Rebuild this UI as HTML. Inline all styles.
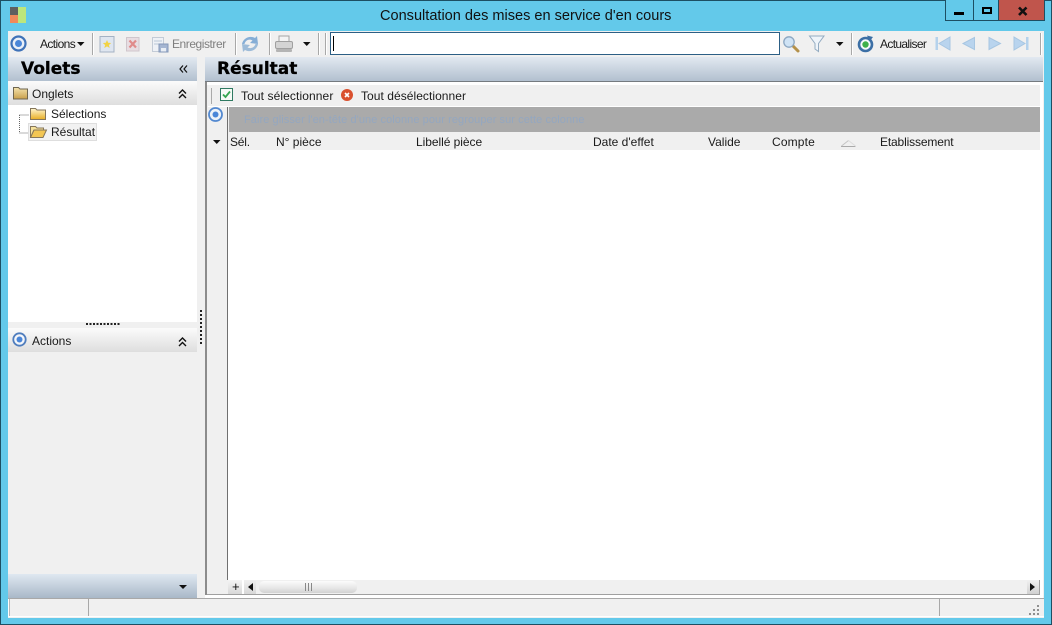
<!DOCTYPE html>
<html lang="fr"><head><meta charset="utf-8"><title>Consultation des mises en service d'en cours</title>
<style>
html,body{margin:0;padding:0;}
body{width:1052px;height:625px;overflow:hidden;position:relative;background:#63c9ea;font-family:"Liberation Sans",sans-serif;font-size:12px;color:#1a1a1a;}
.a{position:absolute;}
.t{position:absolute;white-space:nowrap;line-height:14px;}
.h{position:absolute;white-space:nowrap;font-family:"DejaVu Sans",sans-serif;font-size:17px;line-height:21px;font-weight:bold;color:#000;-webkit-text-stroke:.3px #000;}
svg{position:absolute;overflow:visible;}
.sep{position:absolute;width:1px;height:22px;top:33px;background:#a8a8a8;box-shadow:1px 0 0 #fff;}
</style></head><body>
<svg width="0" height="0" style="left:0;top:0"><defs>
<linearGradient id="g1" x1="0" y1="0" x2="0" y2="1"><stop offset="0" stop-color="#fff6cf"/><stop offset="1" stop-color="#e8ae24"/></linearGradient>
<linearGradient id="g2" x1="0" y1="0" x2="0" y2="1"><stop offset="0" stop-color="#f4e3ad"/><stop offset="1" stop-color="#c99f4c"/></linearGradient>
</defs></svg>
<div class="a" style="left:0;top:0;width:1050px;height:623px;border:1px solid #1d4f63;"></div>
<!-- app icon -->
<div class="a" style="left:10px;top:7px;width:8px;height:8px;background:#5f5f5f"></div>
<div class="a" style="left:10px;top:15px;width:8px;height:8px;background:#f0895a"></div>
<div class="a" style="left:18px;top:7px;width:8px;height:16px;background:#bde67c"></div>
<div class="t" style="left:380px;top:7px;font-size:14.55px;line-height:18px;color:#111">Consultation des mises en service d'en cours</div>
<!-- window buttons -->
<div class="a" style="left:945px;top:0;width:100px;height:21px;background:#c0554c;border:1px solid #1d4f63;border-top:0;box-sizing:border-box;"></div>
<div class="a" style="left:946px;top:0;width:53px;height:20px;background:#63c9ea"></div>
<div class="a" style="left:973px;top:0;width:1px;height:21px;background:#1d4f63"></div>
<div class="a" style="left:998px;top:0;width:1px;height:21px;background:#1d4f63"></div>
<div class="a" style="left:954px;top:12px;width:10px;height:3px;background:#000"></div>
<div class="a" style="left:982px;top:7px;width:6px;height:3px;border:2px solid #000;"></div>
<svg style="left:1018px;top:7px" width="10" height="9"><path d="M1 .5L8.500 8M8.500 .5L1 8" stroke="#111" stroke-width="2.600" fill="none"/></svg>
<!-- main client -->
<div class="a" style="left:8px;top:31px;width:1036px;height:587px;background:#f0f0f0"></div>
<!-- toolbar -->
<svg style="left:10px;top:35px" width="18" height="18"><circle cx="8.500" cy="8.500" r="7" fill="#e9eff8" stroke="#3f72b8" stroke-width="2.200"/><circle cx="8.500" cy="8.500" r="3.500" fill="#4a86d8"/></svg>
<div class="t" style="left:40px;top:37px;letter-spacing:-.6px">Actions</div>
<svg style="left:77px;top:42px" width="8" height="5"><path d="M0 0H7.500L3.750 4Z" fill="#111"/></svg>
<div class="sep" style="left:92px"></div>
<svg style="left:99px;top:36px" width="16" height="17"><rect x="1" y=".5" width="14" height="15.500" fill="#dfe6f0" stroke="#a4b2c4"/><path d="M8 4l1.200 2.800 3 .2-2.300 2 .8 3-2.700-1.600L5.300 12l.8-3-2.300-2 3-.2z" fill="#f2d345"/></svg>
<svg style="left:126px;top:37px" width="14" height="15"><rect x=".5" y=".5" width="12.500" height="13.500" fill="#e8dde2" stroke="#cfc6cc"/><path d="M3.500 3.500l6.500 7m0-7l-6.500 7" stroke="#e08b8b" stroke-width="2.200"/></svg>
<svg style="left:152px;top:37px" width="17" height="16"><rect x=".5" y=".5" width="11" height="14" fill="#eef1f6" stroke="#c3cbd6"/><path d="M2 4h8M2 7h8" stroke="#b9c6d6"/><rect x="7" y="7" width="9" height="8" fill="#a5b6d2" stroke="#8497b8"/><rect x="9" y="11" width="5" height="3.500" fill="#e9eef5"/></svg>
<div class="t" style="left:172px;top:37px;color:#7f7f7f;letter-spacing:-.45px">Enregistrer</div>
<div class="sep" style="left:235px"></div>
<svg style="left:241px;top:35px" width="18" height="18"><path d="M1 9C2 3 9 0 14 3l2-2 1 8-8-1 2.500-2.500C8.500 3.500 4.500 5 3.500 9z" fill="#86aed6"/><path d="M17 9c-1 6-8 9-13 6l-2 2-1-8 8 1-2.500 2.500c3 1.500 7 0 8-3.500z" fill="#9dbbd8"/></svg>
<div class="sep" style="left:269px"></div>
<svg style="left:275px;top:35px" width="18" height="18"><rect x="4" y="1" width="10" height="6" fill="#f4f4f4" stroke="#a4a4a4"/><rect x=".5" y="6.500" width="17" height="7" rx="1.500" fill="#d4d4d4" stroke="#a0a0a0"/><rect x="1" y="14" width="16" height="3" rx="1" fill="#b4b4b4"/></svg>
<svg style="left:303px;top:42px" width="8" height="5"><path d="M0 0H7.500L3.750 4Z" fill="#111"/></svg>
<div class="sep" style="left:318px"></div>
<div class="sep" style="left:325px"></div>
<div class="a" style="left:330px;top:32px;width:450px;height:23px;box-sizing:border-box;background:#fff;border:1px solid #2c5f85;"></div>
<div class="a" style="left:333px;top:36px;width:1px;height:15px;background:#000"></div>
<svg style="left:782px;top:35px" width="18" height="18"><path d="M10.500 10.500L16 16" stroke="#b4914a" stroke-width="3" stroke-linecap="round"/><circle cx="7" cy="7" r="5.200" fill="#cfe3f5" stroke="#8ca7c2" stroke-width="1.300"/></svg>
<svg style="left:809px;top:35px" width="16" height="18"><path d="M.5 1H15L9.500 8.500V16.500L6 14V8.500Z" fill="#eef4fa" stroke="#93abc1"/></svg>
<svg style="left:836px;top:42px" width="8" height="5"><path d="M0 0H7.500L3.750 4Z" fill="#111"/></svg>
<div class="sep" style="left:851px"></div>
<svg style="left:857px;top:35px" width="18" height="18"><circle cx="8.500" cy="9.500" r="6.500" fill="#f4f8fb" stroke="#3c6fa5" stroke-width="2.600"/><circle cx="8.500" cy="9.500" r="3.200" fill="#3db04a"/><path d="M10 0.500l6 1.500-3.500 4.500z" fill="#3c6fa5"/></svg>
<div class="t" style="left:880px;top:37px;letter-spacing:-.65px">Actualiser</div>
<svg style="left:935px;top:36px" width="16" height="16"><path d="M.5 1h2.500v13H.5z" fill="#b5d2ec"/><path d="M15 1v13L4 7.500z" fill="#b9d4ee" stroke="#a7c6e2"/></svg>
<svg style="left:962px;top:37px" width="14" height="14"><path d="M12.500 .5v12L1 6.500z" fill="#b9d4ee" stroke="#a7c6e2"/></svg>
<svg style="left:988px;top:37px" width="14" height="14"><path d="M1 .5v12L12.500 6.500z" fill="#b9d4ee" stroke="#a7c6e2"/></svg>
<svg style="left:1013px;top:36px" width="16" height="16"><path d="M1 1v13L12 7.500z" fill="#b9d4ee" stroke="#a7c6e2"/><path d="M13 1h2.500v13H13z" fill="#b5d2ec"/></svg>
<div class="sep" style="left:1040px"></div>
<!-- left panel -->
<div class="a" style="left:8px;top:57px;width:189px;height:24px;background:linear-gradient(#e2e9f1,#b2c0cf)"></div>
<div class="h" style="left:21px;top:59px">Volets</div>
<svg style="left:179px;top:65px" width="10" height="9"><path d="M4 .5L1 4l3 3.500M8 .5L5 4l3 3.500" fill="none" stroke="#111" stroke-width="1.200"/></svg>
<div class="a" style="left:8px;top:81px;width:189px;height:24px;background:linear-gradient(#fbfbfb,#dedede)"></div>
<svg style="left:13px;top:86px" width="15" height="14"><path d="M.5 13V1.500h5l1.500 1.500h7.500v10z" fill="url(#g2)" stroke="#6e654f"/></svg>
<div class="t" style="left:32px;top:87px">Onglets</div>
<svg style="left:178px;top:89px" width="10" height="10"><path d="M1 4.500L4.500 1 8 4.500M1 9L4.500 5.500 8 9" fill="none" stroke="#111" stroke-width="1.400"/></svg>
<div class="a" style="left:8px;top:105px;width:189px;height:217px;background:#fff"></div>
<svg style="left:19px;top:114px" width="11" height="20"><path d="M.5 1H10M.5 1V19H10" fill="none" stroke="#666" stroke-dasharray="1 1"/></svg>
<svg style="left:30px;top:107px" width="16" height="14"><path d="M.5 12.500V1.500h5l1.500 1.500h8.500v9.500z" fill="url(#g1)" stroke="#85765a"/></svg>
<div class="t" style="left:51px;top:107px">Sélections</div>
<div class="a" style="left:28px;top:123px;width:69px;height:18px;box-sizing:border-box;background:#f2f2f2;border:1px solid #dedede"></div>
<svg style="left:30px;top:125px" width="17" height="14"><path d="M.5 12.500V1.500h5l1.500 1.500h6.500v2H4z" fill="#f6e29b" stroke="#85765a"/><path d="M.5 12.500L4 5H16.500l-3.500 7.500z" fill="#f3c653" stroke="#85765a"/></svg>
<div class="t" style="left:51px;top:125px">Résultat</div>
<div class="a" style="left:8px;top:322px;width:189px;height:6px;background:#f0f0f0"></div>
<div class="a" style="left:86px;top:323px;width:34px;height:2px;background:repeating-linear-gradient(90deg,#222 0 2px,transparent 2px 3.500px)"></div>
<div class="a" style="left:8px;top:328px;width:189px;height:24px;background:linear-gradient(#fbfbfb,#dedede)"></div>
<svg style="left:12px;top:332px" width="16" height="16"><circle cx="7.500" cy="7.500" r="6.200" fill="#f4f6fa" stroke="#4f7dbd" stroke-width="1.800"/><circle cx="7.500" cy="7.500" r="3" fill="#4a86d8"/></svg>
<div class="t" style="left:32px;top:334px">Actions</div>
<svg style="left:178px;top:337px" width="10" height="10"><path d="M1 4.500L4.500 1 8 4.500M1 9L4.500 5.500 8 9" fill="none" stroke="#111" stroke-width="1.400"/></svg>
<div class="a" style="left:8px;top:574px;width:189px;height:24px;background:linear-gradient(#dfe8f1,#a9b8c8)"></div>
<svg style="left:179px;top:585px" width="9" height="5"><path d="M0 0H8L4 4Z" fill="#111"/></svg>
<!-- splitter -->
<div class="a" style="left:200px;top:310px;width:2px;height:35px;background:repeating-linear-gradient(#222 0 2px,transparent 2px 4px)"></div>
<!-- right panel -->
<div class="a" style="left:205px;top:57px;width:838px;height:25px;background:linear-gradient(#e2e9f1,#b2c0cf);border-bottom:1px solid #757b80;box-sizing:border-box"></div>
<div class="h" style="left:217px;top:59px">Résultat</div>
<div class="a" style="left:205px;top:82px;width:2px;height:515px;background:#8c8c8c"></div>
<div class="a" style="left:207px;top:82px;width:836px;height:3px;background:#fff"></div>
<div class="a" style="left:1040px;top:85px;width:3px;height:513px;background:#fff"></div>
<div class="a" style="left:205px;top:595px;width:838px;height:3px;background:#fff"></div>
<div class="a" style="left:211px;top:88px;width:1px;height:16px;background:#aaa"></div>
<div class="a" style="left:220px;top:88px;width:13px;height:13px;box-sizing:border-box;background:#f6faf6;border:1px solid #2f7a62"></div>
<svg style="left:222px;top:90px" width="10" height="9"><path d="M1 4.500l2.500 2.500L8 1.500" fill="none" stroke="#34a650" stroke-width="1.800"/></svg>
<div class="t" style="left:241px;top:89px;letter-spacing:.1px">Tout sélectionner</div>
<svg style="left:341px;top:89px" width="13" height="13"><circle cx="6" cy="6" r="6" fill="#d9502e"/><path d="M4 4l4 4m0-4l-4 4" stroke="#fff" stroke-width="1.600"/></svg>
<div class="t" style="left:361px;top:89px;letter-spacing:.05px">Tout désélectionner</div>
<div class="a" style="left:208px;top:106px;width:832px;height:1px;background:#fff"></div>
<svg style="left:208px;top:107px" width="16" height="16"><circle cx="7.500" cy="7.500" r="6.500" fill="#eef2f8" stroke="#5288d0" stroke-width="1.800"/><circle cx="7.500" cy="7.500" r="3" fill="#4a86d8"/></svg>
<div class="a" style="left:227px;top:107px;width:1px;height:473px;background:#707070"></div>
<div class="a" style="left:229px;top:107px;width:811px;height:25px;background:#aaaaaa"></div>
<div class="t" style="left:244px;top:113px;font-size:11px;letter-spacing:.07px;color:#94a7c0">Faire glisser l'en-tête d'une colonne pour regrouper sur cette colonne</div>
<svg style="left:213px;top:140px" width="8" height="4"><path d="M0 0H7.500L3.750 4Z" fill="#111"/></svg>
<div class="t" style="left:230px;top:135px;letter-spacing:-.2px">Sél.</div>
<div class="t" style="left:276px;top:135px">N° pièce</div>
<div class="t" style="left:416px;top:135px;letter-spacing:-.05px">Libellé pièce</div>
<div class="t" style="left:593px;top:135px">Date d'effet</div>
<div class="t" style="left:708px;top:135px">Valide</div>
<div class="t" style="left:772px;top:135px;letter-spacing:.15px">Compte</div>
<svg style="left:841px;top:140px" width="15" height="7"><path d="M0 6.500H14.500" stroke="#aaa"/><path d="M.5 6L7.500 .5" stroke="#c4c4c4"/><path d="M7.500 .5L14.500 6" stroke="#ddd"/></svg>
<div class="t" style="left:880px;top:135px;letter-spacing:-.15px">Etablissement</div>
<div class="a" style="left:228px;top:150px;width:812px;height:430px;background:#fff"></div>
<!-- h scrollbar -->
<div class="a" style="left:228px;top:580px;width:14px;height:14px;background:linear-gradient(#f4f4f4,#d8d8d8)"></div>
<div class="a" style="left:242px;top:580px;width:2px;height:14px;background:#fff"></div>
<div class="t" style="left:232px;top:580px;font-size:13px;color:#111">+</div>
<div class="a" style="left:244px;top:580px;width:12px;height:14px;background:linear-gradient(#f0f0f0,#d8d8d8)"></div>
<svg style="left:248px;top:583px" width="6" height="9"><path d="M5 0V8L0 4Z" fill="#111"/></svg>
<div class="a" style="left:259px;top:581px;width:98px;height:12px;border-radius:5px;background:linear-gradient(#fbfbfb,#e6e6e6 60%,#d2d2d2)"></div>
<div class="a" style="left:305px;top:583px;width:7px;height:8px;background:repeating-linear-gradient(90deg,#888 0 1px,transparent 1px 3px)"></div>
<div class="a" style="left:1027px;top:580px;width:12px;height:14px;background:linear-gradient(#f0f0f0,#d0d0d0)"></div>
<svg style="left:1030px;top:583px" width="6" height="9"><path d="M0 0V8L5 4Z" fill="#111"/></svg>
<div class="a" style="left:207px;top:594px;width:833px;height:1px;background:#a0a0a0"></div>
<div class="a" style="left:1039px;top:580px;width:1px;height:14px;background:#a0a0a0"></div>
<!-- status bar -->
<div class="a" style="left:8px;top:598px;width:1036px;height:1px;background:#a8a8a8"></div>
<div class="a" style="left:8px;top:599px;width:1px;height:17px;background:#fff"></div>
<div class="a" style="left:9px;top:599px;width:1px;height:17px;background:#b8b8b8"></div>
<div class="a" style="left:8px;top:616px;width:1036px;height:1px;background:#fff"></div>
<div class="a" style="left:88px;top:599px;width:1px;height:17px;background:#a8a8a8"></div>
<div class="a" style="left:939px;top:599px;width:1px;height:17px;background:#a8a8a8"></div>
<svg style="left:1029px;top:605px" width="12" height="11"><path d="M8 0h2v2H8zM4 4h2v2H4zM8 4h2v2H8zM0 8h2v2H0zM4 8h2v2H4zM8 8h2v2H8z" fill="#8f8f8f"/></svg>
</body></html>
